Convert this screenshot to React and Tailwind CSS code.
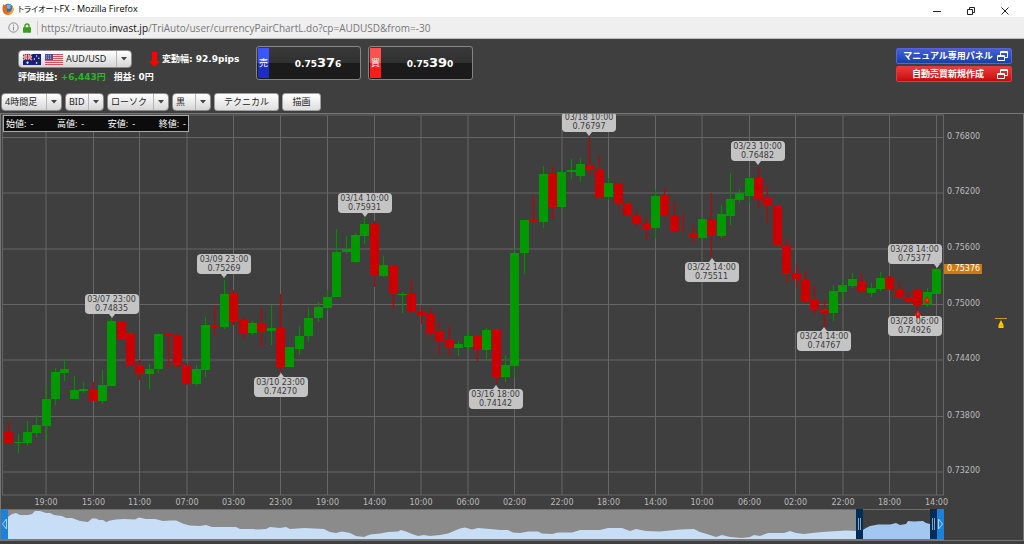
import React from "react";

const JP = "font-['Noto_Sans','Noto_Sans_CJK_JP',sans-serif]";
const UI = "font-['Open_Sans','Noto_Sans_CJK_JP',sans-serif]";
const VERA = "font-['DejaVu_Sans','Noto_Sans_CJK_JP',sans-serif]";

/* Chart space: x runs 1..944, y runs 114..496 */
const X0 = 1, W = 943, Y0 = 114, H = 382;
const left = (x) => `${((x - X0) / W) * 100}%`;
const top = (y) => `${((y - Y0) / H) * 100}%`;

/* [direction, body top, body bottom, wick top, wick bottom] */
const candles = [
  ["d", 432, 443, 422, 444], ["u", 442, 443, 434, 453], ["u", 432, 443, 421, 446], ["u", 425, 433, 415, 437],
  ["u", 399, 426, 385, 440], ["u", 372, 399, 368, 405], ["u", 369, 373, 359, 381], ["u", 390, 399, 376, 399],
  ["u", 389, 391, 382, 393], ["d", 389, 401, 382, 401], ["u", 385, 401, 370, 404], ["u", 321, 386, 318, 386],
  ["d", 321, 339, 321, 339], ["d", 333, 366, 332, 366], ["d", 365, 374, 360, 380], ["u", 369, 374, 364, 389],
  ["u", 334, 369, 333, 373], ["d", 334, 336, 334, 367], ["d", 336, 366, 333, 367], ["d", 366, 384, 363, 385],
  ["u", 369, 384, 365, 386], ["u", 325, 370, 317, 377], ["d", 325, 327, 306, 336], ["u", 294, 327, 280, 329],
  ["d", 294, 322, 290, 325], ["d", 320, 334, 317, 339], ["u", 323, 333, 321, 335], ["d", 323, 332, 308, 347],
  ["u", 328, 331, 305, 345], ["d", 328, 367, 294, 372], ["u", 347, 367, 347, 367], ["u", 336, 349, 326, 355],
  ["u", 318, 336, 307, 342], ["u", 307, 318, 302, 322], ["u", 297, 308, 290, 311], ["u", 252, 297, 229, 297],
  ["u", 249, 252, 236, 254], ["u", 235, 262, 233, 263], ["u", 224, 236, 218, 244], ["d", 224, 276, 221, 287],
  ["u", 265, 276, 256, 277], ["d", 265, 294, 265, 309], ["u", 294, 295, 292, 313], ["d", 294, 312, 280, 313],
  ["d", 312, 315, 305, 324], ["d", 314, 333, 307, 337], ["d", 331, 341, 322, 355], ["d", 340, 348, 326, 355],
  ["u", 344, 348, 341, 356], ["u", 336, 347, 331, 351], ["d", 336, 350, 336, 361], ["u", 330, 350, 328, 361],
  ["d", 330, 377, 330, 384], ["u", 365, 377, 355, 382], ["u", 253, 366, 249, 377], ["u", 220, 253, 220, 274],
  ["d", 220, 222, 195, 223], ["u", 174, 222, 166, 228], ["d", 174, 207, 166, 219], ["u", 172, 207, 169, 207],
  ["u", 170, 172, 159, 179], ["u", 164, 176, 158, 182], ["d", 165, 170, 137, 176], ["d", 169, 197, 156, 197],
  ["u", 183, 197, 178, 200], ["d", 183, 204, 183, 209], ["d", 203, 216, 203, 216], ["d", 216, 224, 210, 227],
  ["d", 223, 229, 217, 240], ["u", 196, 228, 189, 238], ["d", 196, 216, 188, 217], ["d", 216, 231, 202, 232],
  ["d", 231, 232, 214, 232], ["d", 234, 238, 225, 243], ["u", 219, 238, 217, 240], ["d", 219, 236, 193, 257],
  ["u", 214, 236, 205, 238], ["u", 199, 216, 173, 225], ["u", 193, 200, 189, 203], ["u", 178, 196, 177, 203],
  ["d", 178, 199, 167, 208], ["d", 198, 206, 185, 223], ["d", 205, 246, 205, 246], ["d", 246, 274, 239, 283],
  ["d", 273, 279, 265, 287], ["d", 280, 301, 271, 304], ["d", 300, 309, 285, 315], ["d", 309, 313, 299, 327],
  ["u", 291, 313, 285, 321], ["u", 285, 292, 279, 300], ["u", 279, 286, 273, 288], ["d", 281, 292, 273, 293],
  ["u", 288, 293, 283, 297], ["u", 278, 289, 272, 291], ["d", 278, 290, 276, 290], ["d", 289, 298, 282, 299],
  ["d", 297, 302, 292, 303], ["d", 290, 305, 290, 317], ["u", 292, 305, 288, 307], ["u", 269, 294, 268, 294],
];
const candleX = (i) => 8.7 + 9.374 * i;

const times = [
  [46, "19:00"], [93.5, "15:00"], [139.5, "11:00"], [187, "07:00"], [233.5, "03:00"], [280.5, "23:00"],
  [327.5, "19:00"], [374.5, "14:00"], [421, "10:00"], [468, "06:00"], [514.5, "02:00"], [562, "22:00"],
  [608.5, "18:00"], [655.5, "14:00"], [702, "10:00"], [749.5, "06:00"], [795.5, "02:00"], [843, "22:00"],
  [889.5, "18:00"], [936.5, "14:00"],
];
const prices = [
  [137.5, "0.76800"], [193, "0.76200"], [249, "0.75600"], [304.5, "0.75000"],
  [360, "0.74400"], [416.5, "0.73800"], [472, "0.73200"],
];

/* [centre x, top y, pointer x, pointer side, date, price] */
const notes = [
  [111.5, 294, 111.5, "down", "03/07 23:00", "0.74835"],
  [224, 254, 224, "down", "03/09 23:00", "0.75269"],
  [280.5, 377, 280.5, "up", "03/10 23:00", "0.74270"],
  [364.5, 193, 364.5, "down", "03/14 10:00", "0.75931"],
  [495.5, 389, 495.5, "up", "03/16 18:00", "0.74142"],
  [589, 112, 589, "down", "03/18 10:00", "0.76797"],
  [711.5, 262, 711.5, "up", "03/22 14:00", "0.75511"],
  [757.5, 141, 757.5, "down", "03/23 10:00", "0.76482"],
  [824, 331, 824, "up", "03/24 14:00", "0.74767"],
  [914.5, 244, 936.5, "down", "03/28 14:00", "0.75377"],
  [914.5, 316, 917.5, "up", "03/28 06:00", "0.74926"],
];

const history =
  "8,517 12,514 16,513 20,515 28,515 32,514 35,511 40,511 46,513 50,513 54,515 62,516 66,518 72,518 80,521 88,522 92,518.5 96,518.5 99,520 103,520 106,522 110,520.5 116,519.5 124,519 135,519.5 139,517.5 146,519 155,519 163,521 170,520.5 176,520.5 184,524 190,525.5 200,526 206,525 212,527 236,527 240,529 252,529 258,529.5 266,529 270,527 280,528 286,527 290,529 304,528 324,529 330,532 336,533 342,531.5 350,533 356,536 364,537 370,534.5 380,533.5 388,532 398,531.5 401,530 406,531.5 412,534 418,536 424,535 430,536 440,535 448,533.5 454,531 460,528.5 465,527.5 472,529.5 478,528 490,529 500,530 508,530 513,532.5 520,533 528,531.5 538,531.5 542,533.5 552,534 558,532.5 572,532.5 580,530 600,530 608,528 622,528 630,531 636,529 646,531 660,531.5 670,530.5 680,529.5 694,529 700,532 710,535 716,537 722,535 730,537 742,538 750,537 754,535 760,536 768,533 784,533 790,531 796,533 804,534 812,533 822,532 838,531 846,530.5 856,531";
const selected =
  "862,530.5 866,528 870,526 878,524.5 890,524.5 896,523 900,525 906,524 908,521 914,521.5 923,521 926,523 930,524";

function Firefox() {
  return (
    <svg viewBox="0 0 24 24" className="size-3 shrink-0" aria-hidden="true">
      <circle cx="12.5" cy="11.5" r="10" fill="#2f6fb5" />
      <path d="M9 4c4-2 9-1 11 3-2-1-3-1-4 0l2 3-5 2-4-3z" fill="#6fb4e4" />
      <path d="M1 9C1 6 2 4 4 2c0 2 1 3 2 3 2 0 3 0 4 1-2 1-2 3-1 4l3 1c-1 2-3 2-3 4 1 3 6 3 8 1 2-1 3-3 3-6 0-2-1-4-2-5 4 2 6 6 5 10-1 5-6 9-11 9C5 24 0 18 1 9z" fill="#e66a1a" />
      <path d="M20 6c3 3 4 8 1 12-3 4-8 5-12 3 5 0 9-2 10-6 1-3 2-6 1-9z" fill="#f6b72c" />
    </svg>
  );
}

function AuFlag() {
  return (
    <svg viewBox="0 0 18 11" className="h-[11px] w-[18px]" aria-hidden="true">
      <rect width="18" height="11" fill="#1b1f73" />
      <path d="M0 0l9 6M9 0L0 6" stroke="#fff" strokeWidth="1.4" />
      <path d="M0 0l9 6M9 0L0 6" stroke="#d22" strokeWidth=".6" />
      <path d="M4.5 0v6M0 3h9" stroke="#fff" strokeWidth="2" />
      <path d="M4.5 0v6M0 3h9" stroke="#d22" strokeWidth="1" />
      <g fill="#fff">
        <circle cx="4.5" cy="8.7" r="1.1" />
        <circle cx="13.5" cy="2" r=".7" />
        <circle cx="11.4" cy="5" r=".7" />
        <circle cx="15.8" cy="4.3" r=".7" />
        <circle cx="13.6" cy="8.9" r=".8" />
      </g>
    </svg>
  );
}

function UsFlag() {
  return (
    <svg viewBox="0 0 18 11" className="h-[11px] w-[18px]" aria-hidden="true">
      <rect width="18" height="11" fill="#f3dfe2" />
      <path d="M0 .5h18M0 2.5h18M0 4.5h18M0 6.5h18M0 8.5h18M0 10.5h18" stroke="#d4505c" />
      <rect width="8" height="6" fill="#4a4f94" />
      <path d="M1 1.5h6M1 3h6M1 4.5h6" stroke="#c5c8e4" strokeWidth=".6" strokeDasharray="1 1" />
    </svg>
  );
}

function Dropdown({ label, value, options, className, children }) {
  return (
    <label className={`relative flex h-[18px] items-center rounded border border-[#8a8a8a] bg-linear-to-b from-white to-[#d6d6d6] text-[#222] ${className}`}>
      {children}
      <select
        aria-label={label}
        defaultValue={value}
        className="h-full w-full appearance-none bg-transparent pl-[3px] text-[9px] leading-4 outline-none"
      >
        {options.map((o) => <option key={o}>{o}</option>)}
      </select>
      <span className="pointer-events-none absolute inset-y-0 right-0 flex w-[15px] items-center justify-center border-l border-[#b5b5b5]">
        <svg viewBox="0 0 6 4" className="h-1 w-1.5" aria-hidden="true"><path d="M0 0h6L3 3.5z" fill="#444" /></svg>
      </span>
    </label>
  );
}

function PlainButton({ children, className }) {
  return (
    <button type="button" className={`h-[18px] rounded-[3px] border border-[#a0a0a0] bg-linear-to-b from-white to-[#dedede] text-[9px] leading-4 text-[#222] ${className}`}>
      {children}
    </button>
  );
}

function PriceButton({ side, tone, small, big, last }) {
  return (
    <button type="button" className="flex h-[34px] w-[105px] rounded-[3px] border border-[#858585] bg-linear-to-b from-[#3a3a3a] from-0% via-[#303030] via-50% to-[#1b1b1b] to-50% p-px text-white">
      <span className={`flex h-full w-[11px] items-center justify-center text-[9px] ${tone}`}>{side}</span>
      <span className={`flex h-full flex-1 items-center justify-center pl-2 font-bold ${VERA}`}>
        <span className="flex items-baseline text-[9px] leading-4">
          {small}<span className="text-[13px]">{big}</span>{last}
        </span>
      </span>
    </button>
  );
}

function PanelButton({ children, tone }) {
  return (
    <button type="button" className={`flex h-4 w-[116px] items-center rounded-[2px] border pr-[3px] text-[9px] leading-3 font-bold text-white ${tone}`}>
      <span className="flex-1 pl-0.5 text-center whitespace-nowrap">{children}</span>
      <svg viewBox="0 0 11 10" className="h-[10px] w-[11px]" fill="none" stroke="#fff" aria-hidden="true">
        <path d="M3.5 4.500v-4h7v6h-3" />
        <path d="M3.5 1.500h7" />
        <path d="M.5 4.5h7v5h-7zM.5 5.500h7" />
      </svg>
    </button>
  );
}

function Note({ x, y, px, side, date, price }) {
  return (
    <div className="absolute h-5 w-[54px] -translate-x-1/2 rounded bg-[#c4c4c4] pt-px text-center text-[8px] leading-[9px] text-[#3c3c3c]" style={{ left: left(x), top: top(y) }}>
      <div>{date}</div>
      <div>{price}</div>
      <svg
        viewBox="0 0 6 4"
        className={`absolute h-1 w-1.5 -translate-x-1/2 ${side === "down" ? "top-full" : "bottom-full rotate-180"}`}
        style={{ left: `calc(50% + ${px - x}px)` }}
        aria-hidden="true"
      >
        <path d="M0 0h6L3 4z" fill="#c4c4c4" />
      </svg>
    </div>
  );
}

function Marker({ x, y }) {
  return (
    <svg viewBox="0 0 6 8" className="absolute h-2 w-1.5 -translate-x-1/2 -translate-y-1/2" style={{ left: left(x), top: top(y) }} aria-hidden="true">
      <path d="M3 0l3 5-1 1v2H1V6L0 5z" fill="#e01010" />
      <path d="M3 2l1 3H2z" fill="#ff4a3a" />
    </svg>
  );
}

function Plot() {
  return (
    <div className={`relative min-w-0 flex-1 overflow-hidden ${VERA}`}>
      <svg viewBox={`${X0} ${Y0} ${W} ${H}`} preserveAspectRatio="none" className="absolute inset-0 h-full w-full" role="img" aria-label="AUD/USD">
        <g stroke="#666" strokeWidth="1">
          {times.map(([x]) => <path key={x} d={`M${x} 115V495`} />)}
          {prices.map(([y]) => <path key={y} d={`M2 ${y}H944`} />)}
          <path d="M2.5 115V495M943.5 115V495M2 115H944M2 495H944" />
        </g>
        {candles.map(([dir, bt, bb, wt, wb], i) => {
          const x = Math.round(candleX(i) - 0.5);
          const body = dir === "u" ? "#009a00" : "#cc0000";
          const wick = dir === "u" ? "#008f00" : "#c40000";
          return (
            <g key={i}>
              <path d={`M${x + 0.5} ${wt}V${wb}`} stroke={wick} strokeWidth="1.2" />
              <rect x={x - 4} y={bt} width="9" height={bb - bt} fill={body} />
            </g>
          );
        })}
      </svg>
      {notes.map(([x, y, px, side, date, price]) => (
        <Note key={date} x={x} y={y} px={px} side={side} date={date} price={price} />
      ))}
      <Marker x={917.5} y={314} />
      <Marker x={926.5} y={300} />
      <dl className="absolute top-px left-0.5 flex h-[17px] w-[186px] items-center justify-between border border-[#aaa] bg-[#0c0c0c] px-0.5 font-['Noto_Sans','Noto_Sans_CJK_JP',sans-serif] text-[9px] leading-3 text-white">
        {["始値", "高値", "安値", "終値"].map((t) => (
          <div key={t} className="flex gap-1"><dt>{t}:</dt><dd>-</dd></div>
        ))}
      </dl>
    </div>
  );
}

function Overview() {
  return (
    <div className="relative h-[31px] min-w-0 flex-1">
      <svg viewBox="1 509 943 31" preserveAspectRatio="none" className="absolute inset-0 h-full w-full" aria-hidden="true">
        <rect x="1" y="509" width="862" height="30" fill="#8b8b8b" />
        <path d="M1 509.5H944" stroke="#6e6e6e" />
        <polygon points={`8,539 ${history} 856,539`} fill="#c8def7" />
        <polygon points={`862,539 ${selected} 930,539`} fill="#a2c8f1" />
        <path d="M1 539.5H944" stroke="#777" />
      </svg>
      <button type="button" aria-label="前へ" className="absolute top-0 left-0 flex h-[30px] w-[7px] items-center justify-center bg-[#1b82dc]">
        <svg viewBox="0 0 5 12" className="h-3 w-[5px]" fill="none" stroke="#a8d2f6" aria-hidden="true"><path d="M4.5 1v10L.5 6z" /></svg>
      </button>
      <button type="button" aria-label="次へ" className="absolute top-0 right-0 flex h-[30px] w-2 items-center justify-center bg-[#1b82dc]">
        <svg viewBox="0 0 5 12" className="h-3 w-[5px]" fill="none" stroke="#a8d2f6" aria-hidden="true"><path d="M.5 1v10l4-5z" /></svg>
      </button>
      {[[855, "開始"], [929, "終了"]].map(([x, label]) => (
        <button key={x} type="button" aria-label={label} className="absolute top-0 flex h-[30px] w-[7px] items-center justify-center gap-px bg-[#002d57]" style={{ left: left(x + 1) }}>
          <span className="h-3 w-px bg-[#8fa5bb]" />
          <span className="h-3 w-px bg-[#8fa5bb]" />
        </button>
      ))}
    </div>
  );
}

export default function App() {
  return (
    <div className={`flex min-h-screen flex-col bg-[#3f3f3f] ${JP}`}>
      <header className={UI}>
        <div className="flex h-[17px] items-center bg-white pl-0.5">
          <Firefox />
          <h1 className="flex-1 pl-1 text-[9px] leading-4 text-black">
            <span className="text-[8px] [font-feature-settings:'palt']">トライオート</span>FX - Mozilla Firefox
          </h1>
          <div className="flex items-center gap-[26px] pt-1 pr-[15px] text-[#222]">
            <button type="button" aria-label="最小化"><svg viewBox="0 0 8 8" className="size-2" stroke="currentColor" aria-hidden="true"><path d="M0 4.5h8" /></svg></button>
            <button type="button" aria-label="元に戻す"><svg viewBox="0 0 8 8" className="size-2" fill="none" stroke="currentColor" aria-hidden="true"><path d="M.5 2.5h5v5h-5zM2.5 2V.5h5v5H6" /></svg></button>
            <button type="button" aria-label="閉じる"><svg viewBox="0 0 8 8" className="size-2" stroke="currentColor" aria-hidden="true"><path d="M.5.5l7 7M7.5.5l-7 7" /></svg></button>
          </div>
        </div>
        <div className="flex h-[22px] items-center border-b border-[#b4bfbf] bg-[#efefef] pl-2 text-[#777]">
          <svg viewBox="0 0 11 11" className="size-[11px]" fill="none" stroke="#8a8a8a" aria-hidden="true"><circle cx="5.5" cy="5.5" r="4.7" /><path d="M5.5 4.7v3.6M5.5 2.6v1.2" /></svg>
          <svg viewBox="0 0 8 10" className="ml-1 h-2.5 w-2" aria-hidden="true"><path d="M2 5V3a2 2 0 014 0v2" fill="none" stroke="#3f9a22" strokeWidth="1.4" /><rect y="4.3" width="8" height="5.4" rx=".6" fill="#3f9a22" /></svg>
          <span className="mr-[3px] ml-1.5 h-3.5 w-px bg-[#ccc]" />
          <p className="text-[10px] leading-4 whitespace-nowrap">
            https://triauto.<span className="text-[#111]">invast.jp</span>/TriAuto/user/currencyPairChartL.do?cp=AUDUSD&amp;from=-30
          </p>
        </div>
      </header>

      <section className="flex pt-[7px] pr-3 pl-[18px] text-white">
        <div className="w-[238px] pt-1">
          <div className="flex items-center">
            <Dropdown label="通貨ペア" value="AUD/USD" options={["AUD/USD", "USD/JPY", "EUR/USD"]} className="w-[114px] pl-1">
              <span className="flex shrink-0 gap-1"><AuFlag /><UsFlag /></span>
            </Dropdown>
            <svg viewBox="0 0 11 15" className="ml-[17px] h-[15px] w-[11px]" aria-hidden="true"><path d="M3 0h5v9h3l-5.500 6L0 9h3z" fill="#f00" /></svg>
            <span className={`pl-0.5 text-[9px] leading-4 font-bold whitespace-nowrap ${VERA}`}>変動幅: 92.9pips</span>
          </div>
          <div className={`flex gap-2 text-[9px] leading-[18px] font-bold whitespace-nowrap ${VERA}`}>
            <span>評価損益: <span className="text-[#22bb22]">+6,443円</span></span>
            <span>損益: 0円</span>
          </div>
        </div>
        <div className="flex gap-[7px]">
          <PriceButton side="売" tone="bg-linear-to-b from-[#3c55ff] from-50% to-[#1d2cc8] to-50%" small="0.75" big="37" last="6" />
          <PriceButton side="買" tone="bg-linear-to-b from-[#ff5050] from-50% to-[#ff1c1c] to-50%" small="0.75" big="39" last="0" />
        </div>
        <div className="ml-auto flex flex-col gap-0.5 pt-0.5">
          <PanelButton tone="border-[#5b63d8] bg-linear-to-b from-[#4460d8] to-[#1440a8]">マニュアル専用パネル</PanelButton>
          <PanelButton tone="border-[#d83a50] bg-linear-to-b from-[#ee3838] to-[#c40808]">自動売買新規作成</PanelButton>
        </div>
      </section>

      <nav className="flex gap-[3px] pt-[7px] pb-0.5 pl-px">
        <Dropdown label="足種" value="4時間足" options={["4時間足", "1時間足", "日足"]} className="w-[61px]" />
        <Dropdown label="価格" value="BID" options={["BID", "ASK"]} className="w-[39px]" />
        <Dropdown label="チャート" value="ローソク" options={["ローソク", "ライン"]} className="w-[62px]" />
        <Dropdown label="背景色" value="黒" options={["黒", "白"]} className="w-[39px]" />
        <PlainButton className="w-[65px]">テクニカル</PlainButton>
        <PlainButton className="w-[39px]">描画</PlainButton>
      </nav>

      <main className="mb-[3px] flex flex-1 flex-col border border-[#777]">
        <div className="flex flex-1">
          <Plot />
          <div className={`relative w-[79px] text-[8px] leading-[10px] text-[#bbb] ${VERA}`}>
            {prices.map(([y, t]) => (
              <span key={t} className="absolute left-[3px] -translate-y-1/2" style={{ top: top(y - 1) }}>{t}</span>
            ))}
            <span className="absolute left-0 w-[38px] -translate-y-1/2 bg-[#d07a0c] pl-[3px] text-white" style={{ top: top(269) }}>0.75376</span>
            <svg viewBox="0 0 12 11" className="absolute right-4 h-[11px] w-3" style={{ top: top(318) }} aria-hidden="true">
              <path d="M0 .5h12" stroke="#c89c10" />
              <path d="M6 2l2.500 5v3h-5V7z" fill="#ffc800" />
              <path d="M3.500 7.500h5" stroke="#e6a000" strokeWidth=".6" />
            </svg>
          </div>
        </div>
        <div className={`relative mr-[79px] h-[13px] text-[8px] leading-[13px] text-[#bbb] ${VERA}`}>
          {times.map(([x, t]) => (
            <span key={x} className="absolute top-0 -translate-x-1/2" style={{ left: left(x) }}>{t}</span>
          ))}
        </div>
        <div className="mr-[79px] flex"><Overview /></div>
      </main>
    </div>
  );
}
